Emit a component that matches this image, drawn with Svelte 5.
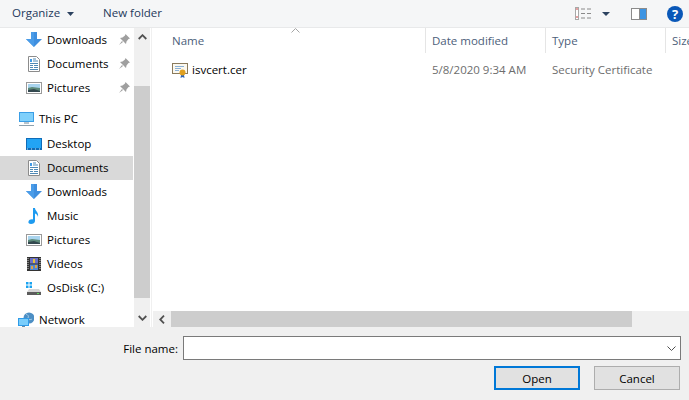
<script>
  const quick = [
    { name: "Downloads", icon: "down", pin: true },
    { name: "Documents", icon: "doc", pin: true },
    { name: "Pictures", icon: "pic", pin: true }
  ];
  const pc = [
    { name: "Desktop", icon: "desk" },
    { name: "Documents", icon: "doc", active: true },
    { name: "Downloads", icon: "down" },
    { name: "Music", icon: "music" },
    { name: "Pictures", icon: "pic" },
    { name: "Videos", icon: "video" },
    { name: "OsDisk (C:)", icon: "disk" }
  ];
</script>

{#snippet icon(kind)}
  <svg class="ico" width="16" height="16" viewBox="0 0 16 16">
    {#if kind === "down"}
      <path d="M5 0h6v7h5l-8 8-8-8h5z" fill="#3f8fdf" />
      <path d="M5 0h3v15L0 7h5z" fill="#4a9ce8" />
    {:else if kind === "doc"}
      <path d="M2.500.5h8l3 3v12h-11z" fill="#fff" stroke="#8c8c8c" />
      <path d="M4 3h2v3H4z" fill="#3f9ae6" />
      <path d="M7 3h3M7 5h5M4 7.500h8M4 9.500h3M8 9.500h4M4 11.500h3M8 11.500h4M4 13.500h8" stroke="#4f89b5" />
    {:else if kind === "pic"}
      <rect x=".5" y="2.500" width="15" height="11" fill="#fff" stroke="#9a9a9a" />
      <rect x="2" y="4" width="12" height="4" fill="#a9d4ee" />
      <path d="M2 8l4-1 8 1v4H2z" fill="#5d8a7a" />
      <path d="M2 10l6-1 6 2v1H2z" fill="#33484f" />
    {:else if kind === "desk"}
      <rect x="0" y="2" width="16" height="12" fill="#0f6cb8" />
      <rect x="1" y="3" width="14" height="9" fill="#22a4f5" />
      <path d="M1 13h14" stroke="#cfe6f7" stroke-dasharray="1 3" />
    {:else if kind === "music"}
      <path d="M7 0h2c0 3 4 4 3 9-.3-2-1.500-3-3-3.500V13c0 2-2 3-4 3s-3-1-2.500-2.500C3 12 5 11 7 11.500z" fill="#1e9bf0" />
    {:else if kind === "video"}
      <rect x="1" y="1" width="14" height="14" fill="#333" />
      <path d="M2 2v12M14 2v12" stroke="#ccc" stroke-dasharray="1 1" />
      <rect x="4" y="2" width="8" height="5.500" fill="#6a70c8" />
      <rect x="4" y="8.500" width="8" height="5.500" fill="#4f86d0" />
      <path d="M7 3h2v4H7z" fill="#e3c23a" />
      <path d="M5 10h2v3H5zM9 9h2v3H9z" fill="#d8a24a" />
    {:else if kind === "disk"}
      <path d="M0 2h2.500v2.500H0zM3.500 2H6v2.500H3.500zM0 5.500h2.500V8H0zM3.500 5.500H6V8H3.500z" fill="#1aa3f0" />
      <path d="M3 9h10l2 3H1z" fill="#d5d5d5" />
      <rect x="1" y="12" width="14" height="3" fill="#5c5c5c" />
      <rect x="11" y="13" width="2" height="1" fill="#5fe05f" />
    {/if}
  </svg>
{/snippet}

{#snippet pin()}
  <svg class="pin" width="11" height="11" viewBox="0 0 11 11">
    <path d="M6.500 0L11 4.500 9.500 5 7.500 7.500 7 10 1 4l2.500-.5L6 1.500z" fill="#9f9f9f" />
    <path d="M3 7l-3 4 4-3z" fill="#9f9f9f" />
  </svg>
{/snippet}

<div class="dialog">
  <div class="toolbar">
    <span class="tool">Organize</span>
    <svg class="caret" width="7" height="4" viewBox="0 0 7 4"><path d="M0 0h7L3.500 4z" fill="#2c4260" /></svg>
    <span class="tool newfolder">New folder</span>
    <div class="tools-right">
      <svg width="17" height="13" viewBox="0 0 17 13">
        <rect x=".5" y=".5" width="3" height="12" fill="#fff" stroke="#a8a8a8" />
        <path d="M1 2h2" stroke="#c44" />
        <path d="M1 10h2" stroke="#c44" />
        <path d="M6 2h4M12 2h4M6 6.500h4M12 6.500h4M6 11h4M12 11h4" stroke="#8a8a8a" />
      </svg>
      <svg class="caret2" width="8" height="4" viewBox="0 0 8 4"><path d="M0 0h8L4 4z" fill="#2c4260" /></svg>
      <svg class="pane" width="16" height="12" viewBox="0 0 16 12">
        <rect width="16" height="12" fill="#8b8b8b" />
        <rect x="1" y="1" width="7" height="10" fill="#fff" />
        <rect x="9" y="1" width="6" height="10" fill="#3d94e2" />
      </svg>
      <svg class="help" width="16" height="16" viewBox="0 0 16 16">
        <circle cx="8" cy="8" r="8" fill="#0a58b8" />
        <text x="8" y="12.500" text-anchor="middle" class="qmark">?</text>
      </svg>
    </div>
  </div>

  <div class="body">
    <nav class="side">
      {#each quick as q}
        <div class="row">
          {@render icon(q.icon)}
          <span>{q.name}</span>
          {#if q.pin}{@render pin()}{/if}
        </div>
      {/each}
      <div class="row top gap-pc">
        <svg class="ico" width="16" height="16" viewBox="0 0 16 16">
          <rect x="1" y="1" width="15" height="10" fill="#3a9ee6" />
          <rect x="2" y="2" width="13" height="8" fill="#7fd0fb" />
          <path d="M6 11h5v2H6z" fill="#b8c4cc" />
          <path d="M1 14h15v1H1z" fill="#8fa1ad" />
        </svg>
        <span>This PC</span>
      </div>
      {#each pc as p}
        <div class="row" class:active={p.active}>
          {@render icon(p.icon)}
          <span>{p.name}</span>
        </div>
      {/each}
      <div class="row top gap-net">
        <svg class="ico" width="16" height="16" viewBox="0 0 16 16">
          <circle cx="11" cy="6" r="5.500" fill="#4d8fc4" />
          <path d="M8 2c2 1 3 2 2 4s3 2 4 1" stroke="#a6cde8" fill="none" />
          <rect x="0" y="6" width="11" height="8" fill="#2f9be8" />
          <rect x="1" y="7" width="9" height="6" fill="#79cdfb" />
          <path d="M4 14h3v2H4z" fill="#6e8aa0" />
        </svg>
        <span>Network</span>
      </div>
    </nav>

    <div class="vscroll">
      <svg class="arrow" width="9" height="6" viewBox="0 0 9 6"><path d="M.7 5l3.800-3.800L8.300 5" fill="none" stroke="#505050" stroke-width="1.800" /></svg>
      <div class="vthumb"></div>
      <svg class="arrow" width="9" height="6" viewBox="0 0 9 6"><path d="M.7 1l3.800 3.800L8.300 1" fill="none" stroke="#505050" stroke-width="1.800" /></svg>
    </div>

    <main class="files">
      <div class="heads">
        <div class="head h-name">Name</div>
        <div class="head h-date">Date modified</div>
        <div class="head h-type">Type</div>
        <div class="head h-size">Size</div>
        <svg class="sort" width="9" height="5" viewBox="0 0 9 5"><path d="M.5 4.500l4-4 4 4" fill="none" stroke="#a5a5a5" /></svg>
      </div>
      <div class="file">
        <div class="f-name">
          <svg width="17" height="16" viewBox="0 0 17 16">
            <rect x=".5" y="1.500" width="15" height="10" fill="#fbf8ef" stroke="#8a7a5c" />
            <path d="M3 4.500h9M3 6.500h6M3 8.500h4" stroke="#8ab0d6" />
            <path d="M9 13l-.5 3 2-1 2 1-.5-3z" fill="#2a62b8" />
            <circle cx="10.500" cy="10.500" r="3" fill="#e0a020" />
          </svg>
          <span>isvcert.cer</span>
        </div>
        <div class="f-date">5/8/2020 9:34 AM</div>
        <div class="f-type">Security Certificate</div>
      </div>
      <div class="hscroll">
        <svg class="harrow" width="6" height="9" viewBox="0 0 6 9"><path d="M5 .7L1.200 4.500 5 8.300" fill="none" stroke="#505050" stroke-width="1.800" /></svg>
        <div class="hthumb"></div>
        <svg class="harrow-r" width="6" height="9" viewBox="0 0 6 9"><path d="M1 .7l3.800 3.800L1 8.300" fill="none" stroke="#505050" stroke-width="1.800" /></svg>
      </div>
    </main>
  </div>

  <div class="bottom">
    <div class="name-line">
      <label for="fname">File name:</label>
      <div class="combo">
        <input id="fname" type="text" />
        <svg width="9" height="5" viewBox="0 0 9 5"><path d="M.5.500l4 4 4-4" fill="none" stroke="#505050" /></svg>
      </div>
    </div>
    <div class="buttons">
      <button class="primary">Open</button>
      <button>Cancel</button>
    </div>
  </div>
</div>

<style>
  :global(body) {
    margin: 0;
    background: #f0f0f0;
  }
  .dialog {
    width: 689px;
    height: 400px;
    overflow: hidden;
    font-family: "Open Sans", "Noto Sans", sans-serif;
    font-size: 11.5px;
    color: #000;
    display: flex;
    flex-direction: column;
  }

  .toolbar {
    height: 28px;
    flex: none;
    box-sizing: border-box;
    border-bottom: 1px solid #e8e9ea;
    background: #f5f6f7;
    display: flex;
    align-items: center;
    padding-left: 12px;
  }
  .tool {
    color: #1e395b;
    position: relative;
    top: -1px;
  }
  .caret {
    margin-left: 7px;
  }
  .newfolder {
    margin-left: 29px;
  }
  .tools-right {
    margin-left: auto;
    display: flex;
    align-items: center;
    padding-right: 6px;
  }
  .caret2 {
    margin-left: 10px;
  }
  .pane {
    margin-left: 21px;
  }
  .help {
    margin-left: 20px;
  }
  .qmark {
    fill: #fff;
    font-size: 13px;
    font-weight: 700;
    font-family: "Open Sans", sans-serif;
  }

  .body {
    flex: 1;
    min-height: 0;
    display: flex;
    background: #fff;
    overflow: hidden;
  }
  .side {
    width: 133px;
    flex: none;
  }
  .row {
    height: 24px;
    display: flex;
    align-items: center;
    padding-left: 26px;
    position: relative;
    white-space: nowrap;
  }
  .row span {
    margin-bottom: 2px;
  }
  .row .ico {
    margin-right: 5px;
    flex: none;
  }
  .row.top {
    padding-left: 18px;
  }
  .gap-pc {
    margin-top: 7px;
    margin-bottom: 1px;
  }
  .gap-net {
    margin-top: 8px;
  }
  .row.active {
    background: #d9d9d9;
  }
  .pin {
    position: absolute;
    left: 119px;
    top: 6px;
  }

  .vscroll {
    width: 16px;
    margin-left: 1px;
    flex: none;
    background: #f0f0f0;
    position: relative;
  }
  .vscroll .arrow {
    position: absolute;
    left: 3.500px;
  }
  .vscroll .arrow:first-child {
    top: 6px;
  }
  .vscroll .arrow:last-child {
    top: 287px;
  }
  .vthumb {
    position: absolute;
    top: 58px;
    left: 0;
    right: 0;
    height: 212px;
    background: #cdcdcd;
  }

  .files {
    flex: 1;
    border-left: 1px solid #f0f0f0;
    position: relative;
    margin-left: 1px;
    padding-left: 2px;
    display: flex;
    flex-direction: column;
  }
  .heads {
    display: flex;
    height: 25px;
    flex: none;
    color: #4c607a;
    position: relative;
  }
  .head {
    flex: none;
    box-sizing: border-box;
    padding-left: 6px;
    line-height: 26px;
    border-right: 1px solid #e5e5e5;
    white-space: nowrap;
  }
  .h-name {
    width: 272px;
    padding-left: 18px;
  }
  .h-date {
    width: 120px;
  }
  .h-type {
    width: 120px;
  }
  .h-size {
    border-right: none;
  }
  .sort {
    position: absolute;
    left: 137px;
    top: 0;
  }

  .file {
    margin-top: 5px;
    height: 24px;
    display: flex;
    align-items: center;
    color: #6d6d6d;
  }
  .f-name {
    width: 272px;
    flex: none;
    box-sizing: border-box;
    padding-left: 18px;
    display: flex;
    align-items: center;
    gap: 3px;
    color: #000;
  }
  .f-name span,
  .f-date,
  .f-type {
    margin-bottom: 2px;
  }
  .f-date,
  .f-type {
    width: 120px;
    flex: none;
    box-sizing: border-box;
    padding-left: 6px;
    white-space: nowrap;
  }

  .hscroll {
    position: absolute;
    left: 1px;
    right: 0;
    bottom: 0;
    height: 16px;
    background: #f0f0f0;
  }
  .harrow {
    position: absolute;
    left: 6px;
    top: 3.500px;
  }
  .harrow-r {
    position: absolute;
    right: -3px;
    top: 3.500px;
  }
  .hthumb {
    position: absolute;
    left: 18px;
    top: 0;
    width: 461px;
    height: 16px;
    background: #cdcdcd;
  }

  .bottom {
    height: 73px;
    flex: none;
    background: #f0f0f0;
    box-sizing: border-box;
    padding: 9px 8px 0 0;
  }
  .name-line {
    display: flex;
    align-items: center;
    justify-content: flex-end;
    gap: 5px;
  }
  .combo {
    width: 498px;
    height: 24px;
    box-sizing: border-box;
    border: 1px solid #7a7a7a;
    background: #fff;
    display: flex;
    align-items: center;
    padding-right: 4px;
  }
  .combo input {
    flex: 1;
    min-width: 0;
    border: none;
    outline: none;
    background: transparent;
  }
  .buttons {
    display: flex;
    justify-content: flex-end;
    gap: 14px;
    margin-top: 6px;
    padding-right: 1px;
  }
  button {
    width: 86px;
    height: 24px;
    box-sizing: border-box;
    border: 1px solid #adadad;
    background: #e1e1e1;
    font: inherit;
    color: #000;
    padding: 0;
  }
  button.primary {
    border: 2px solid #0078d7;
  }
</style>
